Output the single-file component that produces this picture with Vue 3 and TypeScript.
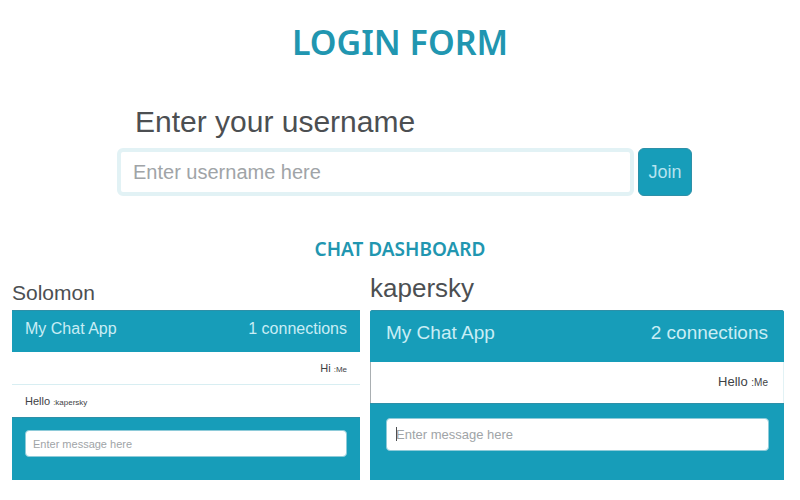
<script setup lang="ts">
import { ref } from 'vue'

interface Message {
  text: string
  author: string
  own: boolean
}

interface ChatPanel {
  user: string
  connections: number
  size: 'compact' | 'regular'
  active: boolean
  messages: Message[]
}

const username = ref('')
const drafts = ref<string[]>(['', ''])

const panels: ChatPanel[] = [
  {
    user: 'Solomon',
    connections: 1,
    size: 'compact',
    active: false,
    messages: [
      { text: 'Hi', author: 'Me', own: true },
      { text: 'Hello', author: 'kapersky', own: false },
    ],
  },
  {
    user: 'kapersky',
    connections: 2,
    size: 'regular',
    active: true,
    messages: [{ text: 'Hello', author: 'Me', own: true }],
  },
]
</script>

<template>
  <main class="page">
    <h1 class="title">LOGIN FORM</h1>

    <form class="login" @submit.prevent>
      <label class="login-label" for="username">Enter your username</label>
      <div class="login-row">
        <input id="username" v-model="username" class="login-input" type="text" placeholder="Enter username here" />
        <button class="join" type="submit">Join</button>
      </div>
    </form>

    <h2 class="subtitle">CHAT DASHBOARD</h2>

    <div class="panels">
      <section v-for="(panel, i) in panels" :key="panel.user" class="panel" :class="panel.size">
        <h3 class="user">{{ panel.user }}</h3>
        <div class="card">
          <header class="card-head">
            <span>My Chat App</span>
            <span>{{ panel.connections }} connections</span>
          </header>
          <ul class="messages">
            <li v-for="(m, j) in panel.messages" :key="j" class="message" :class="{ own: m.own }">
              <span>{{ m.text }} <small>:{{ m.author }}</small></span>
            </li>
          </ul>
          <form class="composer" @submit.prevent>
            <div class="field">
              <input
                v-model="drafts[i]"
                class="composer-input"
                type="text"
                placeholder="Enter message here"
                :aria-label="`Message from ${panel.user}`"
              />
              <span v-if="panel.active" class="caret" aria-hidden="true"></span>
            </div>
          </form>
        </div>
      </section>
    </div>
  </main>
</template>

<style>
body {
  background: #fff;
}
</style>

<style scoped>
.page {
  padding: 16px 16px 20px 12px;
  font-family: "Liberation Sans", Arial, sans-serif;
  color: #4c4f52;
}

.page * {
  box-sizing: border-box;
}

.title,
.subtitle {
  margin: 0;
  padding-left: 4px;
  text-align: center;
  font-family: "Noto Sans", "Open Sans", sans-serif;
  font-weight: 600;
  color: #2196b0;
}

.title {
  font-size: 34px;
  line-height: 52px;
}

.subtitle {
  margin-top: 40px;
  font-size: 19px;
  line-height: 26px;
}

.login {
  margin-top: 36px;
  padding: 0 92px 0 105px;
}

.login-label {
  display: block;
  padding-left: 18px;
  font-size: 30px;
  line-height: 36px;
}

.login-row {
  display: flex;
  gap: 4px;
  margin-top: 8px;
}

.login-input {
  flex: 1;
  min-width: 0;
  height: 48px;
  padding: 0 12px;
  border: 4px solid #e2f2f5;
  border-radius: 6px;
  background: #fff;
  font: inherit;
  font-size: 20px;
  color: #4c4f52;
}

.login-input::placeholder,
.composer-input::placeholder {
  color: #a0a4a7;
  opacity: 1;
}

.join {
  width: 54px;
  height: 48px;
  padding: 0;
  border: 1px solid #2d90a8;
  border-radius: 6px;
  background: #179db9;
  font: inherit;
  font-size: 18px;
  color: #b5e3ef;
}

.panels {
  display: grid;
  grid-template-columns: 348fr 414fr;
  align-items: stretch;
  gap: 10px;
  margin-top: 10px;
}

.panel {
  display: flex;
  flex-direction: column;
}

.user {
  margin: 0;
  height: 38px;
  font-weight: 400;
}

.card {
  flex: 1;
  display: flex;
  flex-direction: column;
  background: #179db9;
}

.card-head {
  display: flex;
  justify-content: space-between;
  align-items: center;
  border-top: 1px solid #2d90a8;
  background: #179db9;
  color: #c9edf5;
}

.messages {
  margin: 0;
  padding: 0;
  list-style: none;
  background: #fff;
}

.message {
  display: flex;
  align-items: center;
  color: #3e4245;
}

.message + .message {
  border-top: 1px solid #d8eef2;
}

.message.own {
  justify-content: flex-end;
}

.composer {
  flex: 1;
  border-top: 1px solid #2d90a8;
}

.field {
  position: relative;
  display: flex;
}

.composer-input {
  flex: 1;
  min-width: 0;
  border: 1px solid #8ecbd9;
  border-radius: 4px;
  background: #fff;
  font: inherit;
  color: #4c4f52;
}

.caret {
  position: absolute;
  top: 9px;
  left: 10px;
  width: 1px;
  height: 14px;
  background: #4c4f52;
}

.compact .user {
  padding-top: 8px;
  font-size: 21px;
  line-height: 26px;
}

.compact .card-head {
  height: 42px;
  padding: 0 13px 5px;
  font-size: 16px;
}

.compact .message {
  box-sizing: content-box;
  height: 32px;
  padding: 0 13px;
  font-size: 11px;
}

.compact .message small {
  font-size: 8px;
}

.compact .composer {
  padding: 12px 13px 23px;
}

.compact .composer-input {
  height: 27px;
  padding: 0 7px;
  font-size: 11px;
}

.regular .user {
  padding-top: 1px;
  font-size: 26px;
  line-height: 30px;
}

.regular .card {
  border-radius: 3px 3px 0 0;
}

.regular .card-head {
  height: 52px;
  padding: 0 16px 7px;
  border-radius: 3px 3px 0 0;
  font-size: 19px;
}

.regular .messages {
  border-left: 1px solid #a9afb2;
  border-right: 1px solid #e2f2f5;
}

.regular .message {
  height: 41px;
  padding: 0 15px 2px;
  font-size: 13px;
}

.regular .message small {
  font-size: 10px;
}

.regular .composer {
  padding: 14px 15px 28px 16px;
}

.regular .composer-input {
  height: 33px;
  padding: 0 9px;
  font-size: 13px;
}
</style>
